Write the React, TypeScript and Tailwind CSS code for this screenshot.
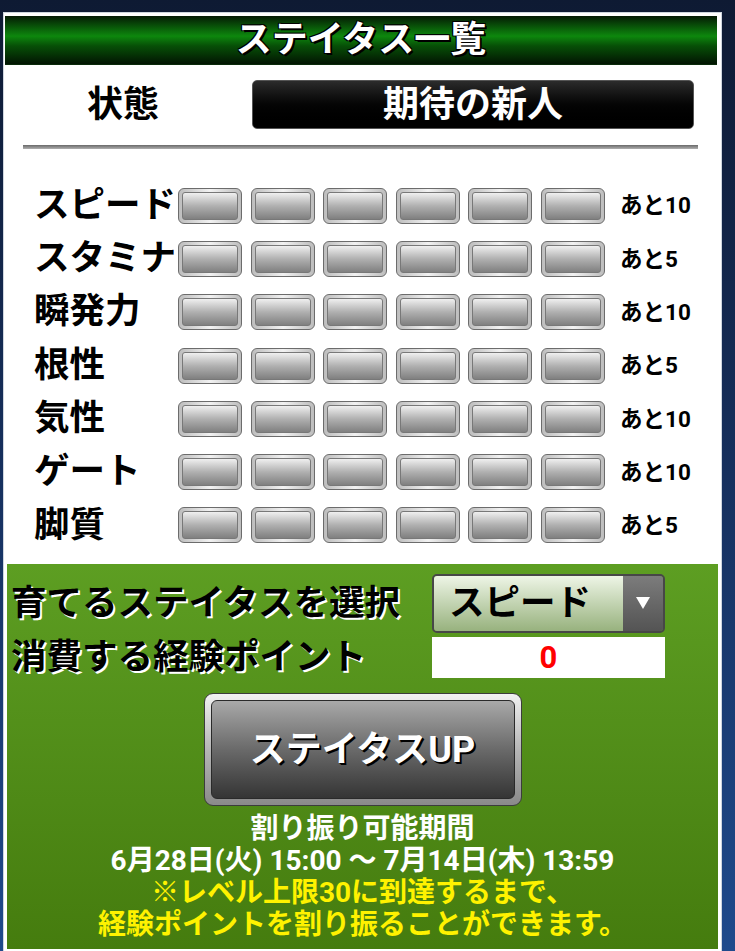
import React from 'react';

const stats = [
    { name: 'スピード', rest: 'あと10' },
    { name: 'スタミナ', rest: 'あと5' },
    { name: '瞬発力', rest: 'あと10' },
    { name: '根性', rest: 'あと5' },
    { name: '気性', rest: 'あと10' },
    { name: 'ゲート', rest: 'あと10' },
    { name: '脚質', rest: 'あと5' },
];

const font = { fontFamily: '"Roboto", "Noto Sans CJK JP", sans-serif' };

function Bar() {
    return (
        <div className="w-[64px] h-[36px] rounded-[6px] border border-[#6c6c6c] bg-gradient-to-r from-[#bdbdbd] via-[#f2f2f2] to-[#bdbdbd] p-[3px]">
            <div className="h-full w-full rounded-[3px] border border-[#787878] bg-gradient-to-b from-[#f0f0f0] via-[#b0b0b0] to-[#808080]" />
        </div>
    );
}

export default function App() {
    return (
        <div
            className="w-[735px] h-[951px] overflow-hidden bg-gradient-to-b from-[#0e1a33] via-[#16305e] to-[#1f4a8c]"
            style={font}
        >
            <div className="ml-[3px] pt-[12px] w-[719px] h-[951px]">
                <div className="h-full bg-white border-x border-t border-[#cfd6df] flex flex-col">
                    {/* header */}
                    <div className="mt-[3px] ml-[1px] w-[712px] h-[49px] flex items-center justify-center bg-[linear-gradient(to_bottom,#041a04_0%,#0b6e0b_32%,#0d870d_42%,#075007_62%,#021402_100%)] border-b border-[#0a2a0a]">
                        <span className="text-white font-bold text-[36px] leading-none [text-shadow:2px_2px_0_#000,-1px_-1px_0_#000,1px_-1px_0_#000,-1px_1px_0_#000]">
                            ステイタス一覧
                        </span>
                    </div>

                    {/* status */}
                    <div className="mt-[15px] h-[49px] flex items-center">
                        <div className="w-[248px] pl-[83px] text-[36px] font-bold leading-none text-black">状態</div>
                        <div className="w-[442px] h-[49px] rounded-[5px] bg-gradient-to-b from-[#2c2c2c] via-[#050505] to-[#000] border border-[#555] flex items-center justify-center">
                            <span className="text-white font-bold text-[36px] leading-none">期待の新人</span>
                        </div>
                    </div>

                    <div className="mt-[16px] ml-[19px] w-[675px] h-[4px] bg-gradient-to-b from-[#6a6a6a] to-[#b0b0b0]" />

                    {/* stats */}
                    <div className="mt-[30px] flex flex-col">
                        {stats.map((s) => (
                            <div key={s.name} className="h-[53.3px] flex items-center">
                                <div className="ml-[30px] w-[144px] text-[35.5px] font-bold leading-none text-black whitespace-nowrap">
                                    {s.name}
                                </div>
                                <div className="flex gap-[8.6px]">
                                    {Array.from({ length: 6 }).map((_, i) => (
                                        <Bar key={i} />
                                    ))}
                                </div>
                                <div className="ml-[15px] text-[22.5px] font-bold leading-none text-black">{s.rest}</div>
                            </div>
                        ))}
                    </div>

                    {/* green area */}
                    <div className="mt-[12px] ml-[3px] w-[711px] h-[385px] bg-gradient-to-b from-[#5d9e22] to-[#457c0e] flex flex-col">
                        <div className="mt-[10px] h-[59px] flex items-center">
                            <div className="ml-[4px] w-[421px] text-[35.5px] font-bold leading-none text-black whitespace-nowrap [text-shadow:2px_2px_0_#fff]">
                                育てるステイタスを選択
                            </div>
                            <div className="w-[233px] h-[59px] rounded-[5px] border-2 border-[#474747] overflow-hidden flex">
                                <div className="flex-1 bg-gradient-to-b from-[#eef5e6] to-[#98b27e] flex items-center pl-[15px]">
                                    <span className="text-[35.5px] font-bold leading-none text-black">スピード</span>
                                </div>
                                <div className="w-[40px] bg-gradient-to-b from-[#7c7c7c] to-[#545454] flex items-center justify-center">
                                    <svg width="14" height="13" viewBox="0 0 14 13">
                                        <path d="M0 0 H14 L7 12 Z" fill="#fff" />
                                    </svg>
                                </div>
                            </div>
                        </div>
                        <div className="mt-[4px] h-[41px] flex items-center">
                            <div className="ml-[4px] w-[421px] text-[35.5px] font-bold leading-none text-black whitespace-nowrap [text-shadow:2px_2px_0_#fff]">
                                消費する経験ポイント
                            </div>
                            <div className="w-[233px] h-[41px] bg-white flex items-center justify-center">
                                <span className="text-[31px] font-bold leading-none text-[#ff0000]">0</span>
                            </div>
                        </div>

                        <div className="mt-[15px] mx-auto w-[318px] h-[113px] rounded-[9px] border border-[#3c3c3c] bg-gradient-to-b from-[#f2f2f2] via-[#b6b6b6] to-[#8a8a8a] p-[6px]">
                            <div className="h-full w-full rounded-[6px] border border-[#2a2a2a] bg-gradient-to-b from-[#a9a9a9] via-[#6a6a6a] to-[#353535] flex items-center justify-center">
                                <span className="text-white text-[36px] font-bold leading-none [text-shadow:2px_2px_0_#000,1px_1px_0_#000]">
                                    ステイタスUP
                                </span>
                            </div>
                        </div>

                        <div className="mt-[7px] flex flex-col items-center text-[28px] font-bold leading-[32px] whitespace-nowrap">
                            <div className="text-white">割り振り可能期間</div>
                            <div className="text-white">6月28日(火) 15:00 〜 7月14日(木) 13:59</div>
                            <div className="text-[#fff200]">※レベル上限30に到達するまで、</div>
                            <div className="text-[#fff200]">経験ポイントを割り振ることができます。</div>
                        </div>
                    </div>
                </div>
            </div>
        </div>
    );
}
